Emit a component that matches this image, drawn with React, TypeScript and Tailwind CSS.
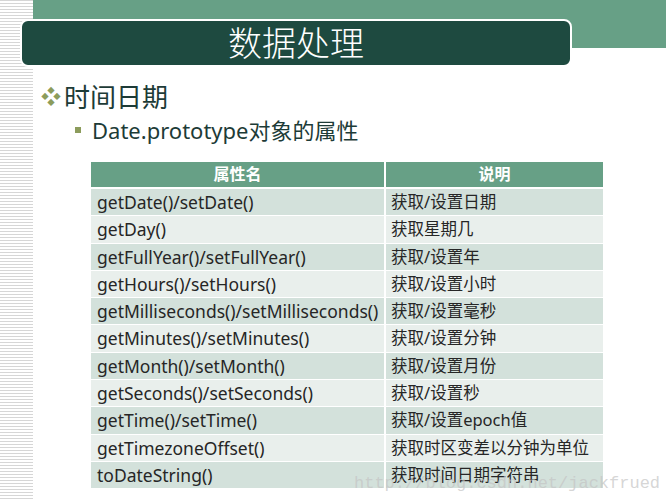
import React from "react";

// Slide: 数据处理 / Date.prototype 属性表
const rows: [string, string][] = [
  ["getDate()/setDate()", "获取/设置日期"],
  ["getDay()", "获取星期几"],
  ["getFullYear()/setFullYear()", "获取/设置年"],
  ["getHours()/setHours()", "获取/设置小时"],
  ["getMilliseconds()/setMilliseconds()", "获取/设置毫秒"],
  ["getMinutes()/setMinutes()", "获取/设置分钟"],
  ["getMonth()/setMonth()", "获取/设置月份"],
  ["getSeconds()/setSeconds()", "获取/设置秒"],
  ["getTime()/setTime()", "获取/设置epoch值"],
  ["getTimezoneOffset()", "获取时区变差以分钟为单位"],
  ["toDateString()", "获取时间日期字符串"],
];

const font = "font-['Noto_Sans','Noto_Sans_CJK_SC',sans-serif]";

export default function App() {
  return (
    <div className={`relative w-[666px] h-[501px] bg-white flex overflow-hidden ${font}`}>
      {/* striped left rail */}
      <div className="w-[33px] shrink-0 h-full bg-[repeating-linear-gradient(to_bottom,#d6d6d6_0px,#d6d6d6_1px,#ffffff_1px,#ffffff_3px)]" />

      <div className="flex-1 flex flex-col">
        <div className="h-[48px] bg-[#67a086]" />

        <div className="pl-[8px] mt-[34px] flex items-center gap-[3px] text-[26px] leading-[30px] text-[#1d3b37]">
          <span className="text-[20px] text-[#8c9c5c] leading-none">❖</span>
          <span>时间日期</span>
        </div>

        <div className="pl-[42px] mt-[5px] flex items-center gap-[11px] text-[22px] leading-[26px] text-[#1d3b37]">
          <span className="w-[6px] h-[6px] bg-[#8c9c5c]" />
          <span>Date.prototype对象的属性</span>
        </div>

        <div className="ml-[58px] mt-[19px] w-[512px]">
          <div className="flex h-[27px] bg-[#67a086] text-white font-bold text-[16px] leading-[25px] border-b-2 border-white">
            <div className="w-[295px] text-center border-r-2 border-white">属性名</div>
            <div className="flex-1 text-center">说明</div>
          </div>
          {rows.map(([name, desc], i) => (
            <div
              key={name}
              className={`flex h-[27.3px] leading-[26px] text-[#262626] border-b border-white ${
                i % 2 === 0 ? "bg-[#d3e1db]" : "bg-[#e9efec]"
              }`}
            >
              <div className="w-[295px] pl-[6px] border-r-2 border-white whitespace-nowrap text-[17.5px]">{name}</div>
              <div className="flex-1 pl-[5px] whitespace-nowrap text-[16.5px]">{desc}</div>
            </div>
          ))}
        </div>
      </div>

      {/* title bar over the band */}
      <div className="absolute left-[20px] top-[19px] w-[552px] h-[48px] rounded-[8px] border-2 border-white bg-[#1e4a40] flex items-center justify-center text-white text-[34px] font-light">
        数据处理
      </div>

      {/* watermark */}
      <div className="absolute left-[354px] top-[471px] text-[17px] font-['Liberation_Mono',monospace] text-[#c4c4c4]/70">
        http://blog.csdn.net/jackfrued
      </div>
    </div>
  );
}
